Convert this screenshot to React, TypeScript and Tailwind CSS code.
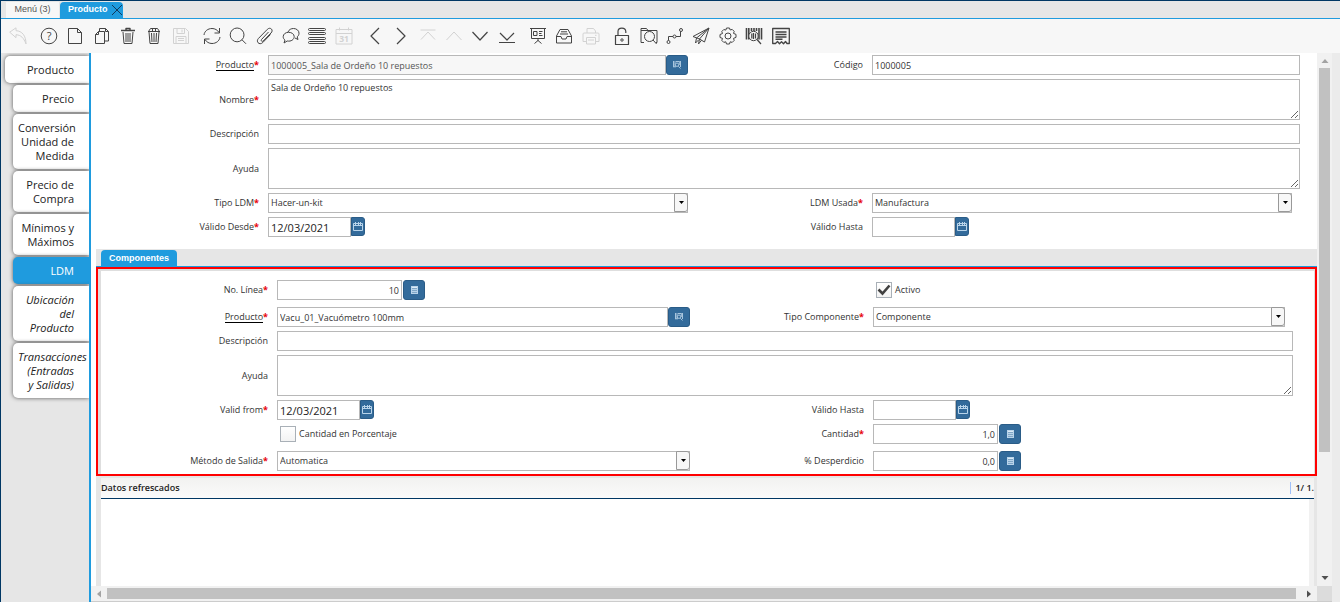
import React, { useState } from 'react';

type IconName =
  | 'undo' | 'help' | 'new' | 'copy' | 'trash' | 'shred' | 'save'
  | 'refresh' | 'search' | 'clip' | 'chat' | 'list' | 'calendar'
  | 'prev' | 'next' | 'first' | 'up' | 'down' | 'last'
  | 'report' | 'archive' | 'print'
  | 'lock' | 'zoomFolder' | 'workflow' | 'send' | 'gear' | 'barcode' | 'receipt';

const icons: Record<IconName, React.ReactNode> = {
  undo: <path d="M.7 5.200 7 .8v2.900c6 .2 10 5 10 13.200C14.800 11 12 8 7 7.700v3z" />,
  help: (
    <>
      <circle cx="9" cy="9" r="7.800" />
      <text x="9" y="13" textAnchor="middle" fontSize="11" fill="currentColor" stroke="none">?</text>
    </>
  ),
  new: <path d="M2.500 1.500h9l4 4v11h-13zM11.500 1.500v4h4" />,
  copy: <path d="M6.500 4V1.500h6l3 3v9.500H11.500M12.500 1.500v3h3M2.500 7.500l3-3h6v12h-9zM2.500 7.500h3v-3" />,
  trash: (
    <>
      <path d="M2 3.500h14M7 3.500v-2h4v2" strokeWidth="1.400" />
      <path d="M4 5l1 11.500h8L14 5M7 6v9M9 6v9M11 6v9" />
    </>
  ),
  shred: (
    <>
      <path d="M3 4.500h12M3.500 4.500 5.500 1.500h7l2 3M4 5l1 11.500h8L14 5" />
      <path d="M6.500 6 7 15M9 6v9M11.500 6 11 15M7.500 2v2M10.500 2v2" />
    </>
  ),
  save: <path d="M1.500 1.500h12l3 3v12h-15zM5 1.500v5h7.500v-5M10 2.500v3M4 16.500v-7h10v7M6 11.500h6M6 13.500h6" />,
  refresh: <path d="M1 8c.5-4 4-6.500 8-6.500 3 0 5.500 1.500 7 4M16.500 1v5h-5M17 10c-.5 4-4 6.500-8 6.500-3 0-5.500-1.500-7-4M1.500 17v-5h5" />,
  search: <path d="M15 7.900a6.900 6.900 0 1 1-13.800 0 6.900 6.900 0 0 1 13.800 0zM13 12.800l4 4" />,
  clip: <path d="m12.500 5-7 7.500c-1 1.200.6 2.600 1.700 1.500L15 6c3-3-.8-6.500-3.600-3.700l-9 9.200c-3 3.300 1.200 7.200 4.400 4l7.700-8" />,
  chat: <path d="M6 5c1-2.500 3.200-3.500 5.500-3.500 3 0 5.500 2 5.500 4.700 0 1.600-.7 2.800-1.800 3.700l.8 2.600-3-1.500M6.500 5.300c-3 0-5.300 1.900-5.300 4.400 0 1.500.7 2.600 1.800 3.300l-1 3 3.200-2c4 .7 7-1.500 7-4.400 0-2.500-2.500-4.300-5.700-4.300z" />,
  list: (
    <>
      <rect x=".5" y="1.500" width="17" height="2" rx="1" />
      <rect x=".5" y="5.500" width="17" height="2" rx="1" />
      <rect x=".5" y="10.500" width="17" height="2" rx="1" />
      <rect x=".5" y="14.500" width="17" height="2" rx="1" />
    </>
  ),
  calendar: (
    <>
      <path d="M1 2.500h16v14.500H1zM1 6.500h16M4.500.5v3M13.500.5v3" />
      <text x="9" y="15" textAnchor="middle" fontSize="8.500" fontWeight="bold" fill="currentColor" stroke="none">31</text>
    </>
  ),
  prev: <path d="m13 1-8 8 8 8" strokeWidth="1.200" />,
  next: <path d="m5 1 8 8-8 8" strokeWidth="1.200" />,
  first: <path d="M1.500 3h15M2 12.500 9 5l7 7.500" />,
  up: <path d="m1.500 13 7.500-8 7.500 8" />,
  down: <path d="m1.500 5 7.500 8 7.500-8" strokeWidth="1.200" />,
  last: <path d="m2 6 7 7 7-7M1 15.500h16" strokeWidth="1.200" />,
  report: <path d="M1 1.500h16M2.500 1.500v10h13v-10M9 11.500V14M5.500 16.500 9 13.500l3.500 3M4.500 4.500H8v4H4.500zM10 4.500h3.500M10 6.500h2.500M10 8.500h3.500" />,
  archive: <path d="M1.500 9 5 2.500h8L16.500 9v7h-15zM1.500 9.500H6l1 2.500h4l1-2.500h4.500M6 4.800h6M5 7h8" />,
  print: <path d="M5 6V1.500h6.500L13.500 4v2M2 6h14c.7 0 1 .4 1 1v7.500h-3M4 14.500H1V7c0-.6.400-1 1-1M4.500 10.500h9V17h-9zM6 13h6M13 8.300h1.500" />,
  lock: (
    <>
      <path d="M2.500 8.500h13v9h-13zM5 8V4.500C5 .2 12.500 0 12.800 4.500V6" strokeWidth="1.200" />
      <circle cx="9" cy="13" r="1.200" />
    </>
  ),
  zoomFolder: <path d="M4 15.500H1v-14h5.500l1.500 2h9v12h-1M1 3.500h7M14.500 9.500a5 5 0 1 1-10 0 5 5 0 0 1 10 0zM13 13l3.600 4" />,
  workflow: (
    <>
      <path d="M2.500 13.500V9.500H7M10 9.500h4.500v-5" />
      <circle cx="2.500" cy="15" r="1.500" /><circle cx="8.500" cy="9.500" r="1.500" /><circle cx="15" cy="3" r="1.500" />
    </>
  ),
  send: <path d="M1 9.500 17 1l-4.500 14-5-3zM17 1 7.500 12 6.500 17l3-3.800M17 1 4.500 11l-1 5 3-3" />,
  gear: (
    <>
      <path d="M7.500 1h3l.7 2 2-.6 2 2-.7 2 2.500 1v3l-2.500 1 .7 2-2 2-2-.6-.7 2.200h-3l-.7-2.200-2 .6-2-2 .7-2L1 10.500v-3l2.500-1-.7-2 2-2 2 .6z" />
      <circle cx="9" cy="9" r="3" />
    </>
  ),
  barcode: (
    <>
      <path d="M1.500 1v11.500M3.800 1v11.500M6.500 1v3M9 1v3M11.500 1v3M14 1v11.500M16.500 1v11.500" strokeWidth="1.600" />
      <circle cx="8.500" cy="9" r="4.700" fill="#f7f7f7" />
      <path d="M6.800 6.500v5M8.500 6v6M10.500 6.500v5M12 12.500l4 4.500" strokeWidth="1.200" />
    </>
  ),
  receipt: (
    <>
      <path d="M.7 1.500h16.600v15h-2.300l-1.500-2-2 2.200-2-2-2 2-2-2.200-2 2H.7z" strokeWidth="1.300" />
      <path d="M3.500 5h11M3.500 7.500h11M3.500 10h11M3.500 12.300h7" strokeWidth="1.400" />
    </>
  ),
};

interface Tool {
  icon: IconName;
  title: string;
  off?: boolean;
}

const toolGroups: { width: string; tools: Tool[] }[] = [
  { width: 'w-[26px]', tools: [{ icon: 'undo', title: 'Deshacer', off: true }] },
  {
    width: 'w-[158px]',
    tools: [
      { icon: 'help', title: 'Ayuda' },
      { icon: 'new', title: 'Nuevo' },
      { icon: 'copy', title: 'Copiar' },
      { icon: 'trash', title: 'Eliminar' },
      { icon: 'shred', title: 'Eliminar selección' },
      { icon: 'save', title: 'Guardar', off: true },
    ],
  },
  {
    width: 'w-[158px]',
    tools: [
      { icon: 'refresh', title: 'Refrescar' },
      { icon: 'search', title: 'Buscar' },
      { icon: 'clip', title: 'Adjuntar' },
      { icon: 'chat', title: 'Chat' },
      { icon: 'list', title: 'Cuadrícula' },
      { icon: 'calendar', title: 'Calendario', off: true },
    ],
  },
  {
    width: 'w-[158px]',
    tools: [
      { icon: 'prev', title: 'Pestaña anterior' },
      { icon: 'next', title: 'Pestaña siguiente' },
      { icon: 'first', title: 'Primero', off: true },
      { icon: 'up', title: 'Anterior', off: true },
      { icon: 'down', title: 'Siguiente' },
      { icon: 'last', title: 'Último' },
    ],
  },
  {
    width: 'w-[79px]',
    tools: [
      { icon: 'report', title: 'Reporte' },
      { icon: 'archive', title: 'Archivo' },
      { icon: 'print', title: 'Imprimir', off: true },
    ],
  },
  {
    width: 'w-[185px]',
    tools: [
      { icon: 'lock', title: 'Bloquear' },
      { icon: 'zoomFolder', title: 'Acercar' },
      { icon: 'workflow', title: 'Flujo de trabajo' },
      { icon: 'send', title: 'Solicitudes' },
      { icon: 'gear', title: 'Proceso' },
      { icon: 'barcode', title: 'Info producto' },
      { icon: 'receipt', title: 'Personalizar' },
    ],
  },
];

const sideTabs = [
  { label: 'Producto', root: true },
  { label: 'Precio' },
  { label: 'Conversión Unidad de Medida' },
  { label: 'Precio de Compra' },
  { label: 'Mínimos y Máximos' },
  { label: 'LDM' },
  { label: 'Ubicación del Producto', italic: true },
  { label: 'Transacciones (Entradas y\u00a0Salidas)', italic: true },
];

const box = 'min-w-0 border border-[#b8b8b8] text-[9px] outline-none';

const Icon = ({ name }: { name: IconName }) => (
  <svg viewBox="0 0 18 18" className="size-[18px]" fill="none" stroke="currentColor" strokeWidth="1" strokeLinejoin="round">
    {icons[name]}
  </svg>
);

interface LabelProps {
  id: string;
  text: string;
  required?: boolean;
  link?: boolean;
}

const Label = ({ id, text, required, link }: LabelProps) => (
  <label htmlFor={id} className="flex items-center justify-end pr-[9px] leading-3">
    <span className={link ? 'border-b border-black leading-[10px]' : ''}>{text}</span>
    {required && <span className="font-bold text-red-600">*</span>}
  </label>
);

const TextField = ({ id, value = '', className = 'bg-white text-[#333]' }: { id: string; value?: string; className?: string }) => (
  <input id={id} defaultValue={value} className={`${box} h-5 w-full px-[2px] ${className}`} />
);

const Area = ({ id, value = '' }: { id: string; value?: string }) => (
  <textarea id={id} defaultValue={value} className={`${box} block h-[41px] w-full bg-white px-[2px] py-[2px] leading-3 text-[#333]`} />
);

const Combo = ({ id, value }: { id: string; value: string }) => (
  <div className="relative w-full">
    <select id={id} className={`${box} block h-5 w-full appearance-none bg-white px-[2px] text-[#333]`}>
      <option>{value}</option>
    </select>
    <span className="pointer-events-none absolute top-0 right-0 flex h-[19px] w-[14px] items-center justify-center rounded-r-[3px] border border-[#999] bg-[#f7f7f7]">
      <svg viewBox="0 0 5 3" className="h-[3px] w-[5px]"><path d="M0 0h5L2.500 3z" /></svg>
    </span>
  </div>
);

const actionButton = 'flex h-5 w-[22px] shrink-0 items-center justify-center rounded-[3px] border border-[#2a5c87] bg-[#336b9b] text-[#a9c6de]';

const LookupField = ({ id, value, className }: { id: string; value: string; className?: string }) => (
  <div className="flex w-full">
    <TextField id={id} value={value} className={className} />
    <button type="button" aria-label="Buscar producto" className={actionButton}>
      <svg viewBox="0 0 8 8" className="size-2" fill="none" stroke="currentColor">
        <path d="M.5 0v6M2 0v6M7.500 0v6M6.300 0v4M3 .5h3" />
        <circle cx="4" cy="3.700" r="1.700" />
        <path d="m5.300 5.200 2.200 2.300M0 5.800h3" />
      </svg>
    </button>
  </div>
);

const NumberField = ({ id, value }: { id: string; value: string }) => (
  <div className="flex gap-px">
    <input id={id} defaultValue={value} className={`${box} h-5 w-[125px] bg-white px-[2px] text-right text-[#333]`} />
    <button type="button" aria-label="Calculadora" className={actionButton}>
      <svg viewBox="0 0 7 8" className="h-2 w-[7px]">
        <path d="M0 0h7v8H0z" fill="#7fa6c6" />
        <path d="M.5 0v8M6.500 0v8M0 .5h7M0 7.500h7M1 3.500h5M1 5.500h5" fill="none" stroke="#b9d4ea" />
        <path d="M1 1.500h5" stroke="#dcebf7" />
      </svg>
    </button>
  </div>
);

const DateField = ({ id, value = '' }: { id: string; value?: string }) => (
  <div className="flex">
    <input id={id} defaultValue={value} className="h-5 w-[83px] border border-[#b8b8b8] px-[2px] text-[11px] text-[#222] outline-none" />
    <button type="button" aria-label="Abrir calendario" className="flex h-[19px] w-[14px] items-center justify-center rounded-r-[3px] border border-[#2a5c87] bg-[#336b9b] text-[#b9d4ea]">
      <svg viewBox="0 0 10 10" className="size-[10px] shrink-0" fill="none" stroke="currentColor">
        <path d="M.5 1.500h9v7h-9zM.5 3.500h9M2.500 0v3M5.500 0v3M7.500 0v3" />
      </svg>
    </button>
  </div>
);

interface CheckProps {
  id: string;
  text: string;
  initial?: boolean;
}

const CheckField = ({ id, text, initial = false }: CheckProps) => {
  const [checked, setChecked] = useState(initial);

  return (
    <div className="flex items-center gap-[3px] pl-[3px]">
      <span className="relative size-4">
        <input
          id={id}
          type="checkbox"
          checked={checked}
          onChange={e => setChecked(e.target.checked)}
          className="block size-4 appearance-none border border-[#a9b0b7] bg-linear-to-b from-white to-[#f3f3f3]"
        />
        {checked && (
          <svg viewBox="0 0 16 16" className="pointer-events-none absolute inset-0 size-4" fill="none" stroke="#404040" strokeWidth="2.600">
            <path d="m2.500 7.500 4 4 7-8" />
          </svg>
        )}
      </span>
      <label htmlFor={id}>{text}</label>
    </div>
  );
};

const outerRow = 'grid grid-cols-[177px_420fr_184px_428fr]';
const innerRow = 'grid grid-cols-[176px_413fr_183px_420fr]';

const Toolbar = () => (
  <div className="flex h-[34px] shrink-0 items-center gap-[5px] bg-[#f7f7f7] pl-1">
    {toolGroups.map((group, i) => (
      <div key={i} className={`flex ${group.width}`}>
        {group.tools.map(tool => (
          <button
            key={tool.icon}
            type="button"
            aria-label={tool.title}
            disabled={tool.off}
            className={`flex flex-1 justify-center ${tool.off ? 'text-[#d2d2d2]' : 'text-[#444]'}`}
          >
            <Icon name={tool.icon} />
          </button>
        ))}
      </div>
    ))}
  </div>
);

const SideBar = () => {
  const [active, setActive] = useState('LDM');

  return (
    <nav className="flex w-[90px] shrink-0 flex-col items-end gap-[2px] overflow-hidden border-r-2 border-[#1f9bde] bg-[#e6e6e6] pt-[3px]">
      {sideTabs.map(tab => (
        <button
          key={tab.label}
          type="button"
          onClick={() => setActive(tab.label)}
          className={`rounded-l-[5px] pt-[7px] pr-[15px] pb-[6px] pl-[5px] text-right text-[11px] leading-[14px] shadow-[0_0_4px_#555] ${
            tab.root ? 'w-[84px]' : 'w-[76px]'
          } ${tab.italic ? 'italic' : ''} ${active === tab.label ? 'bg-[#1f9bde] font-medium text-white' : 'bg-white text-[#222]'}`}
        >
          {tab.label}
        </button>
      ))}
    </nav>
  );
};

const ProductForm = () => (
  <form className="flex flex-col gap-1 pt-[2px] pr-[17px] pb-3">
    <div className={outerRow}>
      <Label id="producto" text="Producto" required link />
      <LookupField id="producto" value="1000005_Sala de Ordeño 10 repuestos" className="bg-[#f7f7f7] text-[#555]" />
      <Label id="codigo" text="Código" />
      <TextField id="codigo" value="1000005" />
    </div>
    <div className={outerRow}>
      <Label id="nombre" text="Nombre" required />
      <div className="col-span-3"><Area id="nombre" value="Sala de Ordeño 10 repuestos" /></div>
    </div>
    <div className={outerRow}>
      <Label id="descripcion" text="Descripción" />
      <div className="col-span-3 flex"><TextField id="descripcion" /></div>
    </div>
    <div className={outerRow}>
      <Label id="ayuda" text="Ayuda" />
      <div className="col-span-3"><Area id="ayuda" /></div>
    </div>
    <div className={outerRow}>
      <Label id="tipo" text="Tipo LDM" required />
      <Combo id="tipo" value="Hacer-un-kit" />
      <Label id="usada" text="LDM Usada" required />
      <div className="pr-2"><Combo id="usada" value="Manufactura" /></div>
    </div>
    <div className={outerRow}>
      <Label id="desde" text="Válido Desde" required />
      <DateField id="desde" value="12/03/2021" />
      <Label id="hasta" text="Válido Hasta" />
      <DateField id="hasta" />
    </div>
  </form>
);

const ComponentForm = () => (
  <form className="flex flex-col gap-1 bg-white pt-[9px] pr-[21px] pb-[3px]">
    <div className={`${innerRow} pb-[3px]`}>
      <Label id="linea" text="No. Línea" required />
      <NumberField id="linea" value="10" />
      <span />
      <CheckField id="activo" text="Activo" initial />
    </div>
    <div className={innerRow}>
      <Label id="comp-producto" text="Producto" required link />
      <LookupField id="comp-producto" value="Vacu_01_Vacuómetro 100mm" />
      <Label id="comp-tipo" text="Tipo Componente" required />
      <div className="pr-2"><Combo id="comp-tipo" value="Componente" /></div>
    </div>
    <div className={innerRow}>
      <Label id="comp-descripcion" text="Descripción" />
      <div className="col-span-3 flex"><TextField id="comp-descripcion" /></div>
    </div>
    <div className={innerRow}>
      <Label id="comp-ayuda" text="Ayuda" />
      <div className="col-span-3"><Area id="comp-ayuda" /></div>
    </div>
    <div className={innerRow}>
      <Label id="comp-desde" text="Valid from" required />
      <DateField id="comp-desde" value="12/03/2021" />
      <Label id="comp-hasta" text="Válido Hasta" />
      <DateField id="comp-hasta" />
    </div>
    <div className={`${innerRow} pb-[3px]`}>
      <span />
      <CheckField id="porcentaje" text="Cantidad en Porcentaje" />
      <Label id="cantidad" text="Cantidad" required />
      <NumberField id="cantidad" value="1,0" />
    </div>
    <div className={innerRow}>
      <Label id="metodo" text="Método de Salida" required />
      <Combo id="metodo" value="Automatica" />
      <Label id="desperdicio" text="% Desperdicio" />
      <NumberField id="desperdicio" value="0,0" />
    </div>
  </form>
);

const Arrow = ({ d, className }: { d: string; className: string }) => (
  <svg viewBox="0 0 8 8" className={`size-2 shrink-0 ${className}`} fill="currentColor"><path d={d} /></svg>
);

const App: React.FC = () => {
  return (
    <div className="flex h-screen flex-col overflow-hidden border-t border-l border-[#003764] bg-white font-['Open_Sans','Noto_Sans',sans-serif] text-[9px] text-[#333]">
      <div className="flex h-[18px] shrink-0 items-end border-b border-[#1f9bde] bg-[#e6e6e6] pl-[5px] font-['Liberation_Sans',sans-serif]">
        <button type="button" className="h-4 w-[53px] bg-[#f7f7f7] text-[9px] text-[#555]">Menú (3)</button>
        <button type="button" className="ml-px flex h-4 w-[63px] items-center justify-between rounded-t-sm bg-[#1f9bde] pr-px pl-2 text-[9px] font-bold text-white">
          Producto
          <svg viewBox="0 0 10 10" className="size-[10px]" stroke="#123a5c"><path d="m0 0 10 10M10 0 0 10" /></svg>
        </button>
      </div>
      <Toolbar />

      <div className="flex min-h-0 flex-1">
        <SideBar />

        <div className="flex min-w-0 flex-1 flex-col">
          <div className="flex min-h-0 flex-1">
            <main className="flex min-w-0 flex-1 flex-col overflow-hidden">
              <ProductForm />

              <div className="ml-[5px] flex min-h-0 flex-1 flex-col bg-[#e6e6e6]">
                <div className="shrink-0 border-b border-[#1f9bde] pt-px pl-[5px]">
                  <button type="button" className="block h-4 w-[76px] rounded-t-sm bg-[#1f9bde] pt-px font-['Liberation_Sans',sans-serif] text-[9px] font-bold text-white">
                    Componentes
                  </button>
                </div>
                <section className="shrink-0 border-2 border-[#f00] bg-[#dedede] pt-[2px] pr-px pl-[3px]">
                  <ComponentForm />
                </section>
                <div className="mt-[2px] mr-[3px] ml-[5px] flex min-h-0 flex-1 flex-col">
                  <div className="flex h-[21px] shrink-0 items-center justify-between border-b border-[#003764] bg-linear-to-b from-[#f2f2f0] to-[#fafafa] font-semibold text-[#222]">
                    <span>Datos refrescados</span>
                    <span className="border-l border-[#9fc0fa] pl-1 leading-3 whitespace-nowrap">1/ 1.</span>
                  </div>
                  <div className="flex-1 border-r-5 border-[#f1f1f1] bg-white" />
                </div>
              </div>
            </main>

            <div className="flex w-[15px] shrink-0 flex-col items-center bg-[#f1f1f1] pt-1 pb-1">
              <Arrow d="M.5 6 4 2l3.500 4z" className="text-[#a3a3a3]" />
              <div className="mt-[3px] flex w-full flex-1 flex-col px-[2px]">
                <div className="flex-[384] bg-[#c1c1c1]" />
                <div className="flex-[122]" />
              </div>
              <Arrow d="M.5 2h7L4 6z" className="text-[#505050]" />
            </div>
          </div>

          <div className="flex h-4 shrink-0 border-b border-[#ccc] bg-[#f1f1f1]">
            <div className="flex min-w-0 flex-1 items-center px-1">
              <Arrow d="M6 .5v7L2 4z" className="text-[#a3a3a3]" />
              <div className="mx-1 flex flex-1">
                <div className="h-[11px] flex-[1189] bg-[#c1c1c1]" />
                <div className="flex-[5]" />
              </div>
              <Arrow d="M2 .5v7L6 4z" className="text-[#505050]" />
            </div>
            <div className="w-[15px] bg-[#dcdcdc]" />
          </div>
        </div>

        <div className="w-2 shrink-0 bg-[#ebebeb]" />
      </div>
    </div>
  );
};

export default App;
